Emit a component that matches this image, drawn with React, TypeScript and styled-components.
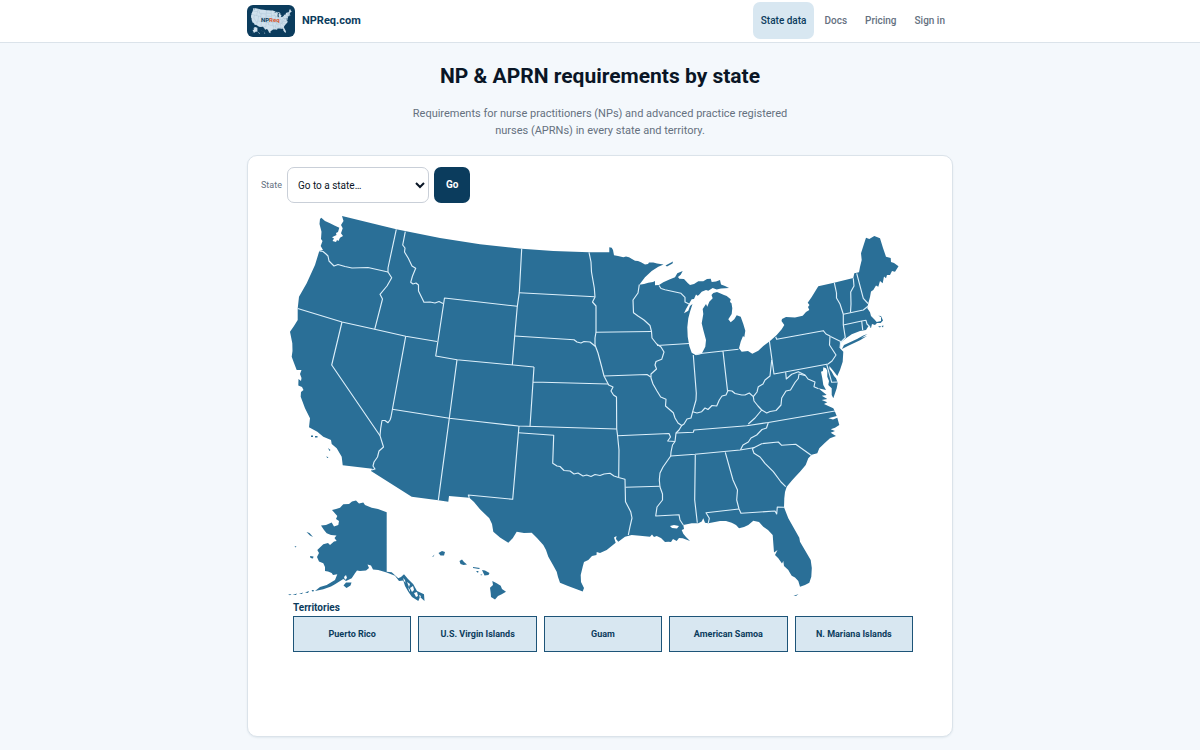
import React from "react";
import styled, { createGlobalStyle } from "styled-components";

const color = {
  navy: "#0b3c5d",
  ink: "#0a1626",
  muted: "#65717f",
  land: "#2a6f97",
  pale: "#d8e7f1",
  line: "#dbe3ea",
  page: "#f4f8fc",
};

const GlobalStyle = createGlobalStyle`
  *, *::before, *::after { box-sizing: border-box; }
  body {
    margin: 0;
    background: ${color.page};
    color: ${color.ink};
    font-family: Roboto, "Open Sans", sans-serif;
    font-size: 10px;
    line-height: 16px;
  }
`;

const Header = styled.header`
  background: #fff;
  border-bottom: 1px solid ${color.line};
`;

const Container = styled.div`
  width: 100%;
  max-width: 706px;
  margin: 0 auto;
`;

const HeaderRow = styled(Container)`
  display: flex;
  align-items: center;
  justify-content: space-between;
  padding: 2px 0 3px;
`;

const Brand = styled.a`
  display: flex;
  align-items: center;
  gap: 7px;
  color: ${color.navy};
  font-size: 11px;
  font-weight: 700;
  text-decoration: none;
`;

const LogoSvg = styled.svg`
  width: 48px;
  height: 32px;
`;

const Nav = styled.nav`
  display: flex;
  gap: 2px;
`;

const NavLink = styled.a<{ $active?: boolean }>`
  padding: 11px 8px 10px;
  border-radius: 7px;
  background: ${(p) => (p.$active ? color.pale : "transparent")};
  color: ${(p) => (p.$active ? color.navy : color.muted)};
  font-weight: 500;
  text-decoration: none;
`;

const Title = styled.h1`
  margin: 19px 0 0;
  font-size: 21px;
  line-height: 28px;
  font-weight: 700;
  text-align: center;
`;

const Lead = styled.p`
  max-width: 400px;
  margin: 15px auto 0;
  color: ${color.muted};
  font-size: 11px;
  line-height: 17px;
  text-align: center;
`;

const Card = styled.section`
  margin: 16px 0 13px;
  padding: 11px 13px 84px;
  border: 1px solid ${color.line};
  border-radius: 10px;
  background: #fff;
  box-shadow: 0 1px 2px rgba(11, 60, 93, 0.08);
`;

const JumpForm = styled.form`
  display: flex;
  align-items: center;
  gap: 5px;
`;

const FieldLabel = styled.label`
  color: ${color.muted};
  font-size: 9px;
`;

const StateSelect = styled.select`
  width: 142px;
  height: 36px;
  padding: 0 6px;
  border: 1px solid #c9cfd8;
  border-radius: 7px;
  background: #fff;
  color: ${color.ink};
  font: inherit;
`;

const GoButton = styled.button`
  height: 36px;
  padding: 0 12px;
  border: 0;
  border-radius: 7px;
  background: ${color.navy};
  color: #fff;
  font: inherit;
  font-weight: 700;
`;

const MapSvg = styled.svg`
  display: block;
  width: 100%;
  overflow: visible;
`;

const Territories = styled.div`
  padding: 0 26px 0 32px;
`;

const TerritoriesTitle = styled.h2`
  margin: 0;
  color: ${color.navy};
  font-size: 10px;
  line-height: 16px;
  font-weight: 700;
`;

const TerritoryGrid = styled.div`
  display: grid;
  grid-template-columns: repeat(5, 1fr);
  gap: 7px;
`;

const TerritoryLink = styled.a`
  padding: 9px 4px;
  border: 1px solid #1d5478;
  background: ${color.pale};
  color: ${color.navy};
  font-size: 9px;
  font-weight: 700;
  text-align: center;
  text-decoration: none;
`;

const MAINLAND =
  "M321.3 217.7L325 221 330 223.3 335 225.7 339.3 227.7 338 232 336 233 336.500 235 332 237.300 334 238.500 332.500 241 336 242 337 240 338.500 241 340 237.700 343 236 341 233.300 342.700 228.300 341 225 343.500 221 342 216 396.300 229.300 440 238 480 244.300 521.700 248.700 553.300 251 589 252.300 609.300 252.300 609.300 247.300 611.700 247.700 613 250 614 255.300 618 256 623.300 257.300 626 256.500 629 257.300 632 259 635 260.700 638 261 641 262.300 645 264.500 648 264 649 262.500 653.300 262.500 657 263.500 663.500 264.500 658.300 266.700 651.700 271 645 277.300 639.300 284.700 644 284 648.300 282.700 653 282 655 281 655 285.300 659 285 663.300 282.300 670 279.300 675 277.300 677.300 273.300 682.700 271 680.700 274.700 678 277 679.300 278.700 684 279 687.700 283 690 285 694 284 698.300 281.300 703.300 281.300 707 279 710.700 278.700 711.700 282 716 281.500 720 280 721 284.500 725 286 729 288 721 288.500 716.700 289.500 712.700 288 708.300 290.700 706 290 701.700 291.700 698 296 696 294.500 694 299 691.700 299.300 688.300 305 686 309 684 313.300 688.300 310.700 690 306 692.500 304 690 311.700 688.300 318.300 687.300 327.300 687.700 336.700 689.300 346 691.700 352.700 696 355.300 701.700 353.700 705.300 346.700 706 340 703.300 330 701.700 323.300 703.300 314 702.700 309 706 304 707.300 306.700 709.300 301.700 712.700 298.300 711.500 295 713.300 293 717 292 720 293.300 724 295 726.700 296 730.700 299.300 730 302 731.500 303.300 732.300 308.300 731.700 314 728.300 319.300 730.700 322.300 734.300 319.300 736.700 315.300 740.700 316.700 743.300 324 745.300 330.700 744.300 337.300 743 336 740.700 341.700 739 348.300 741.700 351.700 748 351 752.300 353.700 758.300 350.700 763.300 346 770 341 776.700 335 781.700 329.300 784.300 325 781.500 321 782 319 786 317 795 317.500 802.700 315.700 806 312 809.300 310 808 307 809.500 305 807.700 302.700 811.700 297 818.300 286.300 834 282.700 853.300 278 854.300 273.300 859 272.300 860 267 861.700 260 861 253.300 863 247 866 237.700 869.300 239 874.300 236 880 238.300 883 248 886 256.700 890.700 258 891 262 894 263 898.500 266.300 895 271.700 892 271 890 275 887 275 886 278.300 884 276.500 882.700 283.300 880 281 878.300 286.700 876 285.500 873.300 290 871 291.500 870 297 868.300 303.300 867.300 308.300 870 312.300 871 316 874 319 876.700 322 881 321 881 317 878.300 315.700 881 316 883 320.500 880.700 323 877 323 875 325 872 324 871 328 868.500 326 866 330 860 331 851.700 334.300 846 338.300 840 343 840 348.300 843.300 351.700 842.700 361.700 840 370 837.300 376 833.300 370.700 829.300 366 829.500 369 831.700 371.700 834 376 836 378.300 837.700 382.700 836.700 388.300 833.300 398.300 831.700 395 831.700 388.300 828.300 385 829 381 827.300 376.700 827.300 371 826 368.300 823.300 367.300 823 371 821 371.700 822.300 378.300 823.300 385 826 390 818.300 388.300 823.300 392.300 826.700 395 821.700 395.700 827.300 399 821.700 400 827.300 402.300 824 404 828.300 406 833.300 408.300 835 411.700 836.700 416 828.300 418.300 833 419.500 837.300 417.700 839.300 425 835 427.700 830.700 429.300 835 431 830.700 432.700 834.300 435 836 436 830 438.300 825 442.700 819.300 448.300 817.300 453.300 811.700 454.700 808.300 458.300 805.700 465 800 471.700 796 476 791.700 480.700 786.700 486.700 785 492 784.300 498.300 784 507.300 788.300 518.300 799.300 537.700 800 541.700 810.700 560 811.800 568 811.300 576.700 809.300 582.700 805 585 800 586.700 798.300 581 795 577.500 791.700 575.700 790 573 788.300 570 784 566 783.300 561 782 563.500 778.300 558.300 775 555 777.500 550 774 552.500 773.300 543.300 772.700 535 768 530 763.300 526.700 759 522 753.300 520.700 748.300 525 744 527 739 528.300 736 525 731.700 522.700 726 521 720 521 708.300 523.300 705 522.700 703.300 518.300 701.700 521.500 698.300 523.300 691.700 523.300 683.300 525 684 529 681.700 530 683.300 533.700 686 537 690 541 682.700 538.300 679 538 676.700 541 673 539 671 542 668.300 541.700 665 542 661 538 656.700 536 654 537 652 534.500 650 536.700 640 535.700 631.700 535 625 536.700 618.300 541.700 616 539 616.500 536 614 537.500 615.700 542.700 606.700 550 600 553 596.700 552 596.500 555 592 556 588.300 560 584 562 582.700 566.700 580.700 575 581 582 584 588 582.700 591.500 576.700 589.300 568 586 560 582.700 558 577 556.700 571.700 553 565 548.300 556.700 546 550 543.300 545 537 538 531.700 532.700 524 533 516.700 531.700 512.700 538.300 508.300 542.700 500 537.500 493.300 531.700 492 524 489.300 518.300 480 509.300 474 502 469.300 497.700 449 496 448.300 501.700 438.300 500.300 411.700 496.700 371 471 372.300 468.700 342.700 465.300 341.700 456.700 336.700 448.300 331.700 444 331 440 323.300 436.700 317.300 431.700 309 427.300 310 418.300 305 408.300 300.700 396.700 301 392 303.500 390 302 387 298.300 385.500 298.500 379 301 381 301.500 378 300 374 301.500 370 296.700 370 294 363 291.700 356.700 292.500 351 292.300 343.300 290 331.700 294 326 297.700 320 297.700 308.500 299 296.700 306.700 283.300 315 265 319.300 251 323 250 320.700 246 322.500 241 321 239 321.500 231.700 319.500 224 320 219Z";

const ALASKA =
  "M386.700 512.300V571.700L391.700 572.300 398.300 578.300 401 577 404 574.300 408 579 413.300 584.300 417 591 424 594.300 424.500 601 420 597 418.300 601 412 597 408.300 591.700 405 586 403.300 580.500 399 581 395 575.700 386.700 572.500 378.300 570 373 569.500 371 565.500 367.500 564.500 369 568 366 570.500 360 571 357 570.500 355 573.300 351.700 578.300 346 581 343.300 579 335 584.300 331 586.500 323.300 589.300 315 591 320 587 326.700 585 335 580 337.300 574.300 333 575 331.700 573 328 571.500 325 571 325 567 323.300 563.300 319 561.500 317 557 319 553 317.300 550 323.300 544.300 328 543 330 545 334 541.500 336.700 541 334.500 538 336.500 535.500 331 535 326.700 533.300 324 530 321 525.500 326 525 331.700 522.500 334 526.500 338.300 525 339 521 336 519 337.300 516 332 510 336 509 340 507.700 343.300 504.300 349 504 352 501.500 356 500.500 359 503.500 363.300 502.500 365 505 371.700 507.700 378 509Z";

const ISLANDS =
  "M343.500 585.500L346 582.500 351.500 582.500 350.500 585.500 346.500 588ZM306.500 532L309.500 533 313 537 310 535.500ZM310 556L313.500 556.500 313 558.500 310.500 558ZM294.500 546.500L296.500 546 295.500 547.500ZM311.500 590L314 590 313 592ZM305 592.500L309 591 308 593ZM299 594L303 592.500 302 594ZM288 594.500L291.500 594 290 595.300ZM292.500 595L297 593.500 296 595ZM438.500 553L442 551 445 552 444 555.500 440.500 555.500ZM432 557L434.500 554.500 433.500 556.500ZM459.500 561L462 559.500 464 562 467 564.500 463.500 565 460.500 564ZM473 567L480 568 479 569 473 568ZM482 570L485 570.500 489.500 573 488.500 575 484.500 575.500ZM476 571L478.500 571 478 573ZM480.500 574.500L482.500 574.500 481 575.500ZM492.300 581L496.700 583.300 500.700 585.700 502 589 506 591.700 501.700 594.300 498 596 495 599.500 491 597 490.700 593 490 587.700 493 585ZM842 349L844 345 850 342.300 857 339 863.300 335.500 867.500 334 861 338 867 336 860 340.300 848.300 345.700ZM878 326.500L881 326 880 327.500ZM881.500 326L883.500 325.500 883 327.500ZM793.500 596L798.500 594 796 596ZM665.500 265.500L673 261.500 672.500 263.500 667 266.500ZM311 435.500H313V437H311ZM315 436H317.500V437.500H315ZM328 448L330.500 450 329.500 451ZM326.500 456L328.500 458 327 458Z";

const BORDERS = [
  // Pacific Northwest and northern Rockies
  "M319.300 251L323 251.500 326 254 328 256 329 261 334 266 338 264.500 345 266.500 352 268 368 267.500 388 272",
  "M396.300 229.300L388 268 388 272 391.700 277.700 387 286 380 294.300 382.500 299 374.700 329.300",
  "M297.700 308.500L342 322 374.700 329.300 405.700 336.300 437 341.500",
  "M405.300 231.700L402.700 245 405 248 404.500 252 408.300 258.300 412 266 415.700 268.300 412.500 276 410.700 282.300 413 284 416 283 418.500 285 418.500 291 424 302.300 430 302 435 303 439 301.500 443 303.500",
  "M534 367L457 359.700 435.700 356 444.500 298 517.300 306.300",
  // Southwest
  "M342 322L331.700 365 380 435.700",
  "M405.700 336.300L391 417 390 420 388 422.700 385 420.500 382 420.500 380.700 428.300 380 435.700 383.500 447 379 451 377.500 457 374 462 373 466 375 469 371.500 470",
  "M392.300 409.300L449.300 418.300 480 421.700 518.300 426 616.700 429",
  "M457 359.700L449.300 418.300 438.300 500.300",
  "M519 426L512.700 499.300 468.300 495 469.300 497.700",
  // Great Plains
  "M521.700 248.700L519.300 292.700 517.300 306.300 514.700 336 512.300 365",
  "M519.300 292.700L594.700 296.700",
  "M514.700 336L574 339.700 577 342 581 343 584 341.500 590 342 595.500 346.500",
  "M534 367L530 426.500M533.300 382L608 384",
  "M589 252.300L591 262 591.500 272 594.300 288 595 297 592.500 302 596 306 596 332 595 338 595 345 598 353 602 368 604 376 608.700 385 613 387 611 391 613.500 395 616.500 397 616.700 429 617.500 435 619 450 618.700 477",
  "M596 332.300L651 331.500M604 376L647 374.500 650.700 377",
  "M518.300 432.700L553.700 435.300 552.700 463.300 557 466 560 466.500 564 470.500 570 471 574 474 578 473 583 476 586.700 475 591 476.500 595 474.500 600 475.500 604 474 610 473.300 614 476 618.500 477.500 625 479.300 625.500 501.700 630.700 511.700 632 518 630 526.700 628.300 535",
  // Mississippi valley
  "M639.300 284.700L638 293 633 300 633.500 312.700 638 316 644 320 650 325.500 651.500 331.500 652 338 656.700 344 661 347 664 352 661.700 359.300 656 361.500 655 365 656.500 369 651 374 651 378 653 384 657 391 660.700 397 666 399.300 665.500 406 673.300 412.700 675 418 678 423 681.700 425.500 679 430 676 433 675 441.500 672.500 445 671 452 670.700 456 663 467 660 473 659.300 480 660 487 662.500 494 662.500 500 657 507 655.700 516 679 514.700 680 520 683.300 525",
  "M657 345.500L689 343.500M659 285.500L661 288.500 665 289.700 681 293.300 685 297.300 685 302 689 304",
  "M617.500 435.700L669 433.500 670.500 437 667.700 441 675 441.500M625.500 487.300L659.700 486.300",
  "M693.300 355L696.300 393.300 696 400 692.700 411.700 691 418 687 419 684 424 681.700 425.500",
  "M702.700 353.300L738.500 349.300M723 351.300L727.500 390.700M696 354.500L702.700 353.300",
  "M692.700 411.700L697 413 701.700 411.700 705 408 708 409.500 712 405.500 716.700 406 719.300 400 722 396 726 395 728 390.500 732 391 735 393.500 741.700 395 745 395 749.300 393 753.300 396.700 757 392 758.300 386.700 763 384 765 380 770 376 771.700 360",
  // Appalachia and the South
  "M676 433L693.300 432.300 694 430 746.700 425.700 768.300 422.500 835 411",
  "M670.700 456L695 454.300 740 450 755 447.500",
  "M768.300 422.500L766.500 428 762 429.500 756.700 435 751 438 748.300 442 743 445 740.500 449.700",
  "M753.300 396.700L754 401 758 406 761.700 410 755 418 748.300 424",
  "M761.700 410L766.700 413 770 411.500 776 410.500 781 405 781.700 398 786 391 790.500 390 795 382.500 798.300 378.500 799 374 805 375.500",
  "M769.300 340.700L774 374 826.700 364.300M785.700 372.500L786.300 379 791.700 374.300 798.300 371.700 805 375 808 379 815 382 814 386.700 818.500 388.700",
  "M695.300 455L694.700 500 697.300 522.700",
  "M725.300 452.300L733 480 737.500 490 736.700 500 739 509 741 513.300 775 511 776.700 514 777.300 507 784 507.300",
  "M739 509L706 512.700 709.300 518.300 708.300 523",
  "M752.300 448.500L754 453.300 760 457 765 463.300 773.300 471.700 781 482 785.700 486.700",
  "M752.300 448.500L761.700 443.700 778.300 442 781.700 445.300 795.700 444.300 811.500 455.500",
  // Mid-Atlantic and New England
  "M775.700 336.700L776.700 339.300 823.300 330.700 826 334 830 336 829.500 345 836 355 832 361 828 364 826.700 364.300 831.700 382.300 837.700 382",
  "M830.500 336.500L840.700 341.500 840 348",
  "M834.300 282.700L836.500 293 836.500 298 840 304 843.300 314.300 843.300 325 845.300 337.700 840 343",
  "M853.300 278.300L854 286 850.700 292 851 304 850.500 312.500M856.700 273.300L863.300 298.300 868 303.500",
  "M843.300 314.300L863.300 310 868.300 306M843.300 325L861.700 321 866 320.300 867 324 870 327M861.700 321L862.700 330",
];

const Country = ({ land, line, width }: { land: string; line: string; width: number }) => (
  <>
    <g fill={land}>
      <path d={MAINLAND} />
      <path d={ALASKA} />
      <path d={ISLANDS} />
    </g>
    <g fill="none" stroke={line} strokeWidth={width} strokeLinejoin="round">
      {BORDERS.map((d) => (
        <path key={d} d={d} />
      ))}
    </g>
  </>
);

const Logo = () => (
  <LogoSvg viewBox="0 0 48 32" aria-hidden="true">
    <rect width="48" height="32" rx="6" fill={color.navy} />
    <g transform="translate(-15.500 -11.500) scale(0.067)">
      <Country land="#cfe0ec" line="#8fb0c6" width={4} />
    </g>
    <text x="14" y="17" fontSize="6" fontWeight="700" fill={color.navy}>
      NP<tspan fill="#d9552b">Req</tspan>
    </text>
  </LogoSvg>
);

const UsMap = () => (
  <MapSvg viewBox="261 203 678 397" role="img" aria-label="Map of the United States">
    <Country land={color.land} line="#dceffa" width={1.15} />
    <g fill="#fff">
      <path d="M670 526L674 525 679 526 677 528.500 672 528Z" />
      <path d="M403 578L405 580 405.500 583 404 581ZM407 582L410 584 409 587ZM410 588L413 586 414 590 412 592ZM414 593L417 592 418 596 416 597ZM408 587L410 590 409.500 592ZM419 595L421 596 420 598Z" />
      <path d="M697 297L699 295 700 298 698 302ZM344 577L346 575 347 578 345 580Z" />
    </g>
  </MapSvg>
);

const NAV = ["State data", "Docs", "Pricing", "Sign in"];
const TERRITORIES = [
  "Puerto Rico",
  "U.S. Virgin Islands",
  "Guam",
  "American Samoa",
  "N. Mariana Islands",
];

export default function App() {
  return (
    <>
      <GlobalStyle />
      <Header>
        <HeaderRow>
          <Brand href="#">
            <Logo />
            NPReq.com
          </Brand>
          <Nav>
            {NAV.map((item, i) => (
              <NavLink key={item} href="#" $active={i === 0}>
                {item}
              </NavLink>
            ))}
          </Nav>
        </HeaderRow>
      </Header>
      <Container as="main">
        <Title>NP &amp; APRN requirements by state</Title>
        <Lead>
          Requirements for nurse practitioners (NPs) and advanced practice registered nurses (APRNs)
          in every state and territory.
        </Lead>
        <Card>
          <JumpForm>
            <FieldLabel htmlFor="state">State</FieldLabel>
            <StateSelect id="state">
              <option>Go to a state…</option>
            </StateSelect>
            <GoButton type="button">Go</GoButton>
          </JumpForm>
          <UsMap />
          <Territories>
            <TerritoriesTitle>Territories</TerritoriesTitle>
            <TerritoryGrid>
              {TERRITORIES.map((name) => (
                <TerritoryLink key={name} href="#">
                  {name}
                </TerritoryLink>
              ))}
            </TerritoryGrid>
          </Territories>
        </Card>
      </Container>
    </>
  );
}
